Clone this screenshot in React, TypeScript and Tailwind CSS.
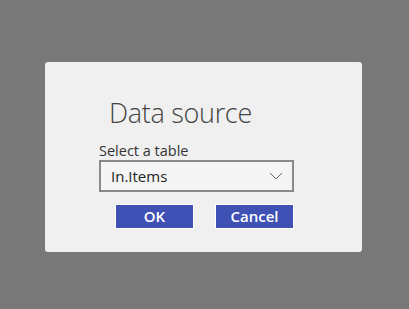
export default function App() {
  return (
    <div
      className="flex h-[309px] w-[409px] items-start bg-[#787878] pl-[45px] pt-[62px]"
      style={{ fontFamily: '"Open Sans", "Noto Sans", sans-serif' }}
    >
      <div className="flex h-[190px] w-[317px] flex-col rounded-[3px] bg-[#f0f0f0] pl-[54px] pt-[37px]">
        <h1 className="ml-[10px] text-[27px] font-light leading-[28px] tracking-[-0.3px] text-[#444444]">
          Data source
        </h1>
        <label className="mt-[16px] text-[14.5px] leading-[15px] text-[#333333]">
          Select a table
        </label>
        <div className="mt-[2px] flex h-[32px] w-[195px] items-center justify-between border-2 border-[#8a8a8a] bg-[#f5f5f5] pl-[10px] pr-[9px]">
          <span className="text-[15px] leading-[15px] text-[#222222]">In.Items</span>
          <svg width="14" height="8" viewBox="0 0 14 8" fill="none">
            <path d="M1 1 L7 7 L13 1" stroke="#666666" strokeWidth="1" />
          </svg>
        </div>
        <div className="mt-[12px] flex w-[195px] justify-end gap-[21px]">
          <button className="h-[25px] w-[79px] border border-white bg-[#3f51b5] text-[15px] font-semibold leading-[15px] text-white">
            OK
          </button>
          <button className="h-[25px] w-[79px] border border-white bg-[#3f51b5] text-[15px] font-semibold leading-[15px] text-white">
            Cancel
          </button>
        </div>
      </div>
    </div>
  );
}
